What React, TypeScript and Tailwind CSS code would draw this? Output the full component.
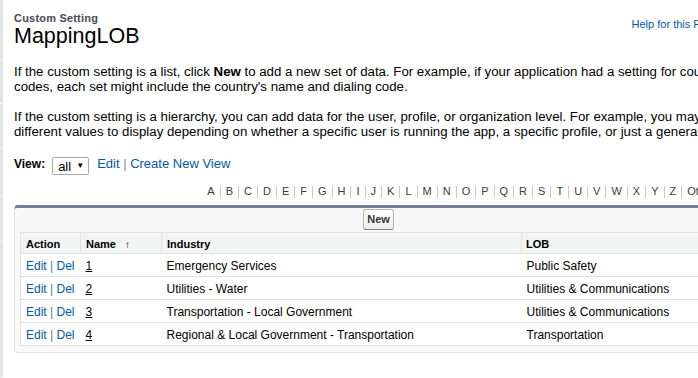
import React from 'react';

const letters = 'ABCDEFGHIJKLMNOPQRSTUVWXYZ'.split('').concat(['Other', 'All']);

const rows = [
  { name: '1', industry: 'Emergency Services', lob: 'Public Safety' },
  { name: '2', industry: 'Utilities - Water', lob: 'Utilities & Communications' },
  { name: '3', industry: 'Transportation - Local Government', lob: 'Utilities & Communications' },
  { name: '4', industry: 'Regional & Local Government - Transportation', lob: 'Transportation' },
];

function EdgeStrip() {
  // thin grey frame edge on the left, broken into segments
  const segs = [61, 43, 45, 48, 45, 136];
  return (
    <div className="flex flex-col w-[3px] shrink-0">
      {segs.map((h, i) => (
        <div key={i} className="bg-[#e4e4e4] border-b border-[#f6f6f6]" style={{ height: h }} />
      ))}
    </div>
  );
}

export default function App() {
  return (
    <div className="w-[698px] h-[378px] overflow-hidden bg-white flex font-['Liberation_Sans',Arial,sans-serif] text-black">
      <EdgeStrip />
      <div className="w-[729px] shrink-0 ml-[11px]">
        {/* Page header */}
        <div className="flex justify-between items-start pt-[12px]">
          <div>
            <div className="text-[11px] leading-[13px] font-bold text-[#4a4a56] tracking-[0.2px]">Custom Setting</div>
            <h1 className="text-[21.5px] leading-[22px] font-normal text-black">MappingLOB</h1>
          </div>
          <div className="flex items-center mt-[4px] mr-[3px]">
            <a className="text-[11px] leading-[13px] text-[#015ba7]">Help for this Page</a>
            <span className="ml-[5px] w-[16px] h-[16px] rounded-full bg-[#e8a631] text-white text-[11px] font-bold flex items-center justify-center">?</span>
          </div>
        </div>

        {/* Description */}
        <p className="mt-[17px] text-[13.25px] leading-[15px] whitespace-nowrap">
          If the custom setting is a list, click <b>New</b> to add a new set of data. For example, if your application had a setting for country
          <br />
          codes, each set might include the country's name and dialing code.
        </p>
        <p className="mt-[15px] text-[13.25px] leading-[15px] whitespace-nowrap">
          If the custom setting is a hierarchy, you can add data for the user, profile, or organization level. For example, you may want
          <br />
          different values to display depending on whether a specific user is running the app, a specific profile, or just a general user.
        </p>

        {/* View selector */}
        <div className="mt-[18px] flex items-start">
          <span className="text-[12px] leading-[15px] font-bold mt-[-0.5px]">View:</span>
          <div className="ml-[7px] h-[18px] w-[37px] border border-[#a9a9a9] rounded-[2px] bg-white flex items-center pl-[5px] gap-[5px]">
            <span className="text-[13px] leading-[15px]">all</span>
            <span className="text-[8px] leading-[10px]">▼</span>
          </div>
          <div className="ml-[8px] text-[13px] leading-[15px] text-[#015ba7] mt-[-1px]">
            Edit <span className="text-[#7d8fa5]">|</span> Create New View
          </div>
        </div>

        {/* Rolodex */}
        <div className="mt-[10px] flex justify-end text-[11px] leading-[13px] text-[#3c3d3e]">
          {letters.map((l, i) => (
            <span key={l} className="flex items-center">
              <span className="px-[5px]">{l}</span>
              {i < letters.length - 1 && <span className="w-px h-[12px] bg-[#c9c9c9]" />}
            </span>
          ))}
        </div>

        {/* List box */}
        <div className="mt-[7px] border border-[#e0e3e5] border-t-[3px] border-t-[#747e96] rounded-[4px] bg-[#f8f8f8] px-[5px] pt-[1px] pb-[6px]">
          <div className="flex justify-center">
            <button className="h-[21px] px-[3px] border border-[#b5b5b5] border-b-[#7f7f7f] rounded-[3px] bg-gradient-to-b from-white to-[#ededed] text-[11px] font-bold text-[#333]">
              New
            </button>
          </div>
          <table className="mt-[2px] w-full border-collapse border border-[#e0e3e5] bg-white text-[12px]">
            <thead>
              <tr className="bg-[#f2f3f3] text-[11px] leading-[13px] font-bold text-left">
                <th className="w-[60px] border border-[#e0e3e5] pl-[5px] pt-[5px] pb-[2px] font-bold">Action</th>
                <th className="w-[81px] border border-[#e0e3e5] pl-[5px] pt-[5px] pb-[2px] font-bold">
                  Name <span className="ml-[6px] text-[10px]">↑</span>
                </th>
                <th className="w-[360px] border border-[#e0e3e5] pl-[5px] pt-[5px] pb-[2px] font-bold">Industry</th>
                <th className="border border-[#e0e3e5] pl-[4px] pt-[5px] pb-[2px] font-bold">LOB</th>
              </tr>
            </thead>
            <tbody>
              {rows.map((r) => (
                <tr key={r.name} className="border-b border-[#e0e3e5] leading-[15px]">
                  <td className="pl-[5px] pt-[5px] pb-[2px] text-[#015ba7] whitespace-nowrap">
                    Edit <span className="text-[#4f7db0]">|</span> Del
                  </td>
                  <td className="pl-[5px] pt-[5px] pb-[2px]">
                    <span className="underline">{r.name}</span>
                  </td>
                  <td className="pl-[5px] pt-[5px] pb-[2px]">{r.industry}</td>
                  <td className="pl-[5px] pt-[5px] pb-[2px]">{r.lob}</td>
                </tr>
              ))}
            </tbody>
          </table>
        </div>
      </div>
    </div>
  );
}
